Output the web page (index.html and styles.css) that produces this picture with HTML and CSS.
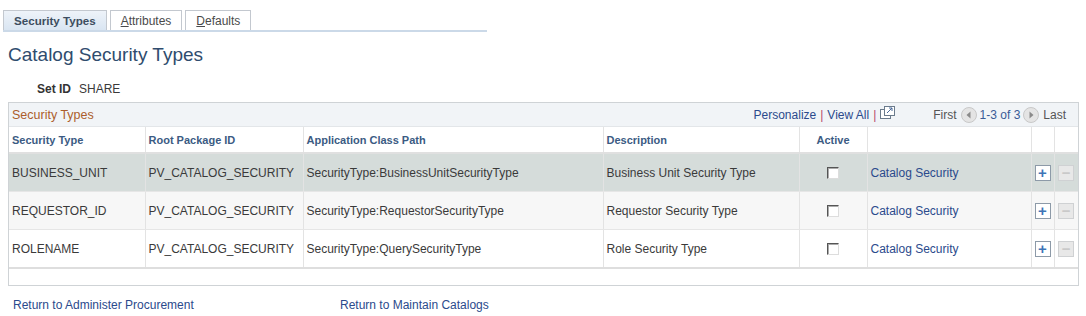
FILE: index.html
```html
<!DOCTYPE html>
<html lang="en">
<head>
	<meta charset="UTF-8" />
	<title>Catalog Security Types</title>
	<link rel="stylesheet" href="styles.css">
</head>
<body>
	<div class="page">
		<div class="tabs">
			<span class="tab selected">Security Types</span>
			<span class="tab"><u>A</u>ttributes</span>
			<span class="tab"><u>D</u>efaults</span>
		</div>
		<h1 class="title">Catalog Security Types</h1>
		<div class="setid">
			<span class="lbl">Set ID</span>
			<span class="val">SHARE</span>
		</div>
		<div class="grid">
			<div class="gridHead">
				<span class="gridTitle">Security Types</span>
				<div class="gridNav">
					<a class="lnk">Personalize</a><span class="sep">|</span><a class="lnk">View All</a><span class="sep">|</span>
					<svg class="popIcon" width="15" height="13" viewBox="0 0 15 13">
						<rect x="0.5" y="3.5" width="10" height="9" fill="#fff" stroke="#6b7b8c"/>
						<rect x="4.5" y="0.5" width="10" height="9" fill="#fff" stroke="#6b7b8c"/>
						<path d="M7 7 L12 2 M9 2 H12 V5" fill="none" stroke="#4a6a9a" stroke-width="1"/>
					</svg>
					<span class="first">First</span>
					<svg class="arrow" width="16" height="16" viewBox="0 0 16 16">
						<circle cx="8" cy="8" r="7.5" fill="#e4e4e4" stroke="#c8c8c8"/>
						<path d="M9.5 4.5 L5.5 8 L9.5 11.5 Z" fill="#8a8a8a"/>
					</svg>
					<span class="count">1-3 of 3</span>
					<svg class="arrow" width="16" height="16" viewBox="0 0 16 16">
						<circle cx="8" cy="8" r="7.5" fill="#e4e4e4" stroke="#c8c8c8"/>
						<path d="M6.5 4.5 L10.5 8 L6.5 11.5 Z" fill="#8a8a8a"/>
					</svg>
					<span class="last">Last</span>
				</div>
			</div>
			<table class="tbl">
				<colgroup>
					<col style="width:136px"><col style="width:158px"><col style="width:300px"><col style="width:196px">
					<col style="width:68px"><col style="width:164px"><col style="width:23px"><col style="width:24px">
				</colgroup>
				<thead>
					<tr>
						<th>Security Type</th>
						<th>Root Package ID</th>
						<th>Application Class Path</th>
						<th>Description</th>
						<th class="center">Active</th>
						<th></th>
						<th></th>
						<th></th>
					</tr>
				</thead>
				<tbody>
					<tr class="sel">
						<td>BUSINESS_UNIT</td>
						<td>PV_CATALOG_SECURITY</td>
						<td>SecurityType:BusinessUnitSecurityType</td>
						<td>Business Unit Security Type</td>
						<td class="center"><span class="chk"></span></td>
						<td><a class="lnk">Catalog Security</a></td>
						<td class="center"><span class="btn add">+</span></td>
						<td class="center"><span class="btn del">&minus;</span></td>
					</tr>
					<tr class="alt">
						<td>REQUESTOR_ID</td>
						<td>PV_CATALOG_SECURITY</td>
						<td>SecurityType:RequestorSecurityType</td>
						<td>Requestor Security Type</td>
						<td class="center"><span class="chk"></span></td>
						<td><a class="lnk">Catalog Security</a></td>
						<td class="center"><span class="btn add">+</span></td>
						<td class="center"><span class="btn del">&minus;</span></td>
					</tr>
					<tr>
						<td>ROLENAME</td>
						<td>PV_CATALOG_SECURITY</td>
						<td>SecurityType:QuerySecurityType</td>
						<td>Role Security Type</td>
						<td class="center"><span class="chk"></span></td>
						<td><a class="lnk">Catalog Security</a></td>
						<td class="center"><span class="btn add">+</span></td>
						<td class="center"><span class="btn del">&minus;</span></td>
					</tr>
				</tbody>
			</table>
			<div class="gridFoot"></div>
		</div>
		<div class="returns">
			<a class="lnk ret1">Return to Administer Procurement</a>
			<a class="lnk">Return to Maintain Catalogs</a>
		</div>
	</div>
</body>
</html>
```

FILE: styles.css
```css
html, body {
	margin: 0;
	padding: 0;
	background: #fff;
}
body {
	font-family: "Liberation Sans", Arial, sans-serif;
	font-size: 12px;
	color: #3a3a3a;
}
.page {
	padding: 10px 8px 0 3px;
}
.tabs {
	display: flex;
	gap: 3px;
	width: 484px;
	height: 20px;
	border-bottom: 2px solid #cbd9e8;
}
.tab {
	display: flex;
	align-items: center;
	padding: 0 10px 0 10px;
	border: 1px solid #c3c8cf;
	border-bottom: none;
	background: #fff;
	color: #4a4a4a;
	font-size: 12px;
}
.tab.selected {
	padding: 0 10px;
	font-weight: bold;
	font-size: 11.6px;
	color: #3d4d60;
	background: linear-gradient(#eef3f9, #d9e5f2);
}
.tab u {
	text-decoration: underline;
}
.title {
	margin: 12px 0 0 5px;
	font-size: 19px;
	font-weight: normal;
	color: #2f4c6e;
	line-height: 22px;
}
.setid {
	margin: 16px 0 0 34px;
	display: flex;
	gap: 8px;
	line-height: 14px;
}
.setid .lbl {
	font-weight: bold;
	color: #333;
}
.setid .val {
	color: #3a3a3a;
}
.grid {
	margin: 6px 0 0 5px;
	width: 1069px;
	border: 1px solid #cfd3d6;
}
.gridHead {
	display: flex;
	justify-content: space-between;
	align-items: center;
	height: 23px;
	background: #f1f4f7;
	border-bottom: 1px solid #e3e6e9;
}
.gridTitle {
	padding-left: 3px;
	font-size: 12.5px;
	color: #ac5e2c;
}
.gridNav {
	display: flex;
	align-items: center;
	padding-right: 12px;
	color: #555;
}
.gridNav .sep {
	color: #b44a6a;
	margin: 0 4px;
}
.popIcon {
	margin: -4px 0 0 0;
}
.first {
	margin-left: 38px;
	margin-right: 4px;
}
.count {
	color: #3a5b96;
	margin: 0 3px;
}
.last {
	margin-left: 4px;
}
.lnk {
	color: #2b4a8c;
	cursor: pointer;
}
.tbl {
	width: 1069px;
	border-collapse: collapse;
	table-layout: fixed;
}
.tbl th {
	height: 25px;
	text-align: left;
	font-size: 11px;
	font-weight: bold;
	color: #3b5b83;
	padding: 0 3px;
	background: #fff;
	border-left: 1px solid #e3e3e3;
	border-bottom: 2px solid #e0e0e0;
}
.tbl td {
	height: 37px;
	padding: 0 3px;
	white-space: nowrap;
	border-left: 1px solid #e3e3e3;
	border-bottom: 1px solid #e6e6e6;
}
.tbl th:first-child, .tbl td:first-child {
	border-left: none;
}
.tbl tbody tr:last-child td {
	border-bottom: 2px solid #dedede;
}
.tbl .center {
	text-align: center;
}
.tbl tr.sel td {
	background: #d5dcda;
}
.tbl tr.alt td {
	background: #f7f7f7;
}
.chk {
	display: inline-block;
	width: 10px;
	height: 10px;
	vertical-align: middle;
	background: #fff;
	border-top: 1px solid #555;
	border-left: 1px solid #555;
	border-right: 1px solid #ddd;
	border-bottom: 1px solid #ddd;
	box-shadow: inset 1px 1px 0 #aaa;
}
.btn {
	display: inline-flex;
	align-items: center;
	justify-content: center;
	width: 14px;
	height: 14px;
	vertical-align: middle;
	font-weight: bold;
	font-size: 15px;
	line-height: 14px;
}
.btn.add {
	border: 1px solid #8d9aa8;
	background: #fff;
	color: #3f74b6;
}
.btn.del {
	border: 1px solid #cfd1d3;
	background: #e8e8e8;
	color: #c9c9c9;
}
.gridFoot {
	height: 16px;
}
.returns {
	display: flex;
	margin: 12px 0 0 10px;
}
.returns .ret1 {
	width: 327px;
}
```
